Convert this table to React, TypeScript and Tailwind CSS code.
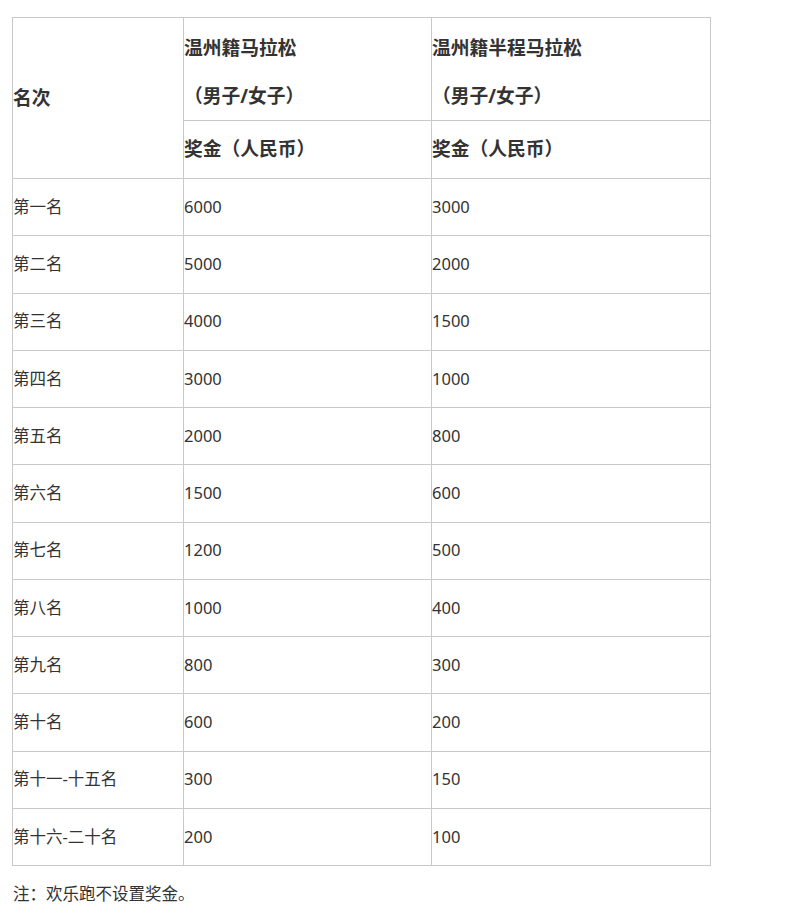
const rows: [string, string, string][] = [
  ['第一名', '6000', '3000'],
  ['第二名', '5000', '2000'],
  ['第三名', '4000', '1500'],
  ['第四名', '3000', '1000'],
  ['第五名', '2000', '800'],
  ['第六名', '1500', '600'],
  ['第七名', '1200', '500'],
  ['第八名', '1000', '400'],
  ['第九名', '800', '300'],
  ['第十名', '600', '200'],
  ['第十一-十五名', '300', '150'],
  ['第十六-二十名', '200', '100'],
];

export default function App() {
  return (
    <div
      className="min-h-[920px] w-[800px] bg-white pl-3 pt-[17px] text-[16.5px] text-[#333]"
      style={{ fontFamily: '"Noto Sans", "Noto Sans CJK SC", sans-serif' }}
    >
      <table className="w-[698px] table-fixed border-collapse">
        <colgroup>
          <col className="w-[171px]" />
          <col className="w-[248px]" />
          <col className="w-[279px]" />
        </colgroup>
        <thead className="text-[18.75px]">
          <tr className="h-[103px]">
            <th rowSpan={2} className="border border-[#c9c9c9] text-left align-middle font-bold">
              名次
            </th>
            <th className="border border-[#c9c9c9] pt-1.5 text-left align-middle font-bold">
              <div className="leading-[48px]">温州籍马拉松</div>
              <div className="leading-[48px]">（男子/女子）</div>
            </th>
            <th className="border border-[#c9c9c9] pt-1.5 text-left align-middle font-bold">
              <div className="leading-[48px]">温州籍半程马拉松</div>
              <div className="leading-[48px]">（男子/女子）</div>
            </th>
          </tr>
          <tr className="h-[58px]">
            <th className="border border-[#c9c9c9] text-left align-middle font-bold">奖金（人民币）</th>
            <th className="border border-[#c9c9c9] text-left align-middle font-bold">奖金（人民币）</th>
          </tr>
        </thead>
        <tbody>
          {rows.map(([rank, full, half]) => (
            <tr key={rank} className="h-[57.25px]">
              <td className="border border-[#c9c9c9] align-middle">{rank}</td>
              <td className="border border-[#c9c9c9] align-middle">{full}</td>
              <td className="border border-[#c9c9c9] align-middle">{half}</td>
            </tr>
          ))}
        </tbody>
      </table>
      <p className="mt-4 pl-px leading-6">注：欢乐跑不设置奖金。</p>
    </div>
  );
}
